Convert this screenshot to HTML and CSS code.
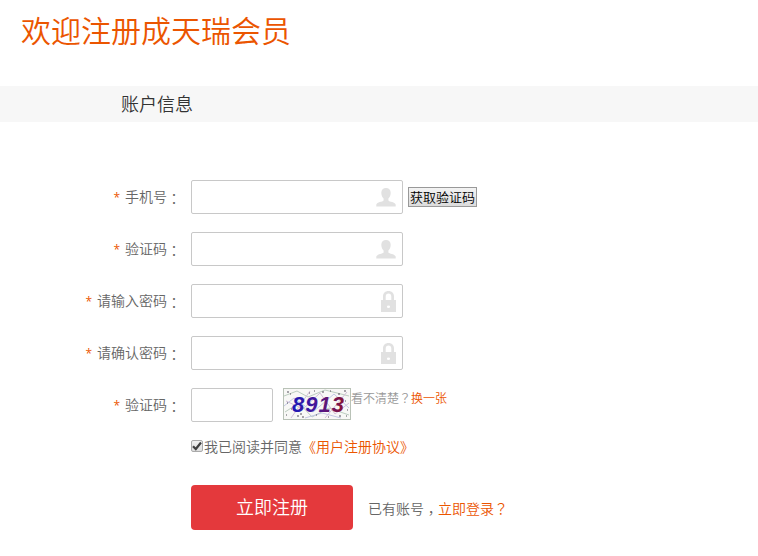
FILE: index.html
```html
<!DOCTYPE html>
<html lang="zh-CN">
<head>
    <meta charset="UTF-8">
    <title>会员注册</title>
    <link rel="stylesheet" href="styles.css">
</head>
<body>
    <svg width="0" height="0" class="defs">
        <symbol id="user" viewBox="0 0 20 20">
            <path d="M10 1C7.200 1 5.300 2.800 5.300 5.800C5.300 8.300 6.300 10.400 7.600 11.500V13.600C6.500 15 1 15.200 0.300 17.500V19.500H19.700V17.500C19 15.200 13.500 15 12.400 13.600V11.500C13.700 10.400 14.700 8.300 14.700 5.800C14.700 2.800 12.800 1 10 1Z"/>
        </symbol>
        <symbol id="lock" viewBox="0 0 15 21">
            <path fill-rule="evenodd" d="M2 9V5.500C2 2.200 4.200 0 7.500 0S13 2.200 13 5.500V9H15V21H0V9ZM4.700 9H10.300V5.500C10.300 3.600 9.200 2.500 7.500 2.500S4.700 3.600 4.700 5.500ZM7.500 14.500A1.600 1.300 0 1 0 7.500 17.100A1.600 1.300 0 1 0 7.500 14.500Z"/>
        </symbol>
    </svg>

    <h1>欢迎注册成天瑞会员</h1>
    <h2>账户信息</h2>

    <form class="reg">
        <div class="row">
            <label for="phone"><i>*</i>手机号<b lang="zh-TW">：</b></label>
            <div class="field">
                <input type="text" id="phone">
                <svg class="ico-user"><use href="#user"/></svg>
            </div>
            <button type="button" class="get-code">获取验证码</button>
        </div>
        <div class="row">
            <label for="sms"><i>*</i>验证码<b lang="zh-TW">：</b></label>
            <div class="field">
                <input type="text" id="sms">
                <svg class="ico-user"><use href="#user"/></svg>
            </div>
        </div>
        <div class="row">
            <label for="pwd"><i>*</i>请输入密码<b lang="zh-TW">：</b></label>
            <div class="field">
                <input type="password" id="pwd">
                <svg class="ico-lock"><use href="#lock"/></svg>
            </div>
        </div>
        <div class="row">
            <label for="pwd2"><i>*</i>请确认密码<b lang="zh-TW">：</b></label>
            <div class="field">
                <input type="password" id="pwd2">
                <svg class="ico-lock"><use href="#lock"/></svg>
            </div>
        </div>
        <div class="row">
            <label for="captcha"><i>*</i>验证码<b lang="zh-TW">：</b></label>
            <div class="field short"><input type="text" id="captcha"></div>
            <!-- 图形验证码 -->
            <svg class="captcha" width="68" height="32" viewBox="0 0 68 32">
                <defs>
                    <linearGradient id="ink" gradientUnits="userSpaceOnUse" x1="9" y1="0" x2="60" y2="0">
                        <stop offset="0" stop-color="#1c18b8"/>
                        <stop offset=".5" stop-color="#4a1796"/>
                        <stop offset="1" stop-color="#861238"/>
                    </linearGradient>
                </defs>
                <rect x=".5" y=".5" width="67" height="31" fill="#f8f8f6" stroke="#b9c2b7"/>
                <g fill="none" stroke="#bccdc0">
                    <path d="M1 8L14 3L25 9L42 2L66 8M2 24L16 15L29 29L46 20L66 27"/>
                    <path stroke="#d3bfd8" d="M3 13L20 21L37 5L52 26L66 15M8 30L27 3M42 30L64 4"/>
                    <path stroke="#c3c8e4" d="M1 18L11 10L30 24L51 6L66 20M22 30L39 25L58 30"/>
                </g>
                <path fill="none" stroke="#554f5c" d="M4 4h2M4 15h1M7 6h1M3 27h1M14 28h2M17 26h2M19 29h2M31 3h1M39 4h2M47 3h1M55 6h2M61 3h2M62 13h1M64 22h1M56 28h2M45 29h1M33 27h1M26 5h1M8 21h1M63 28h1"/>
                <text x="9" y="24" textLength="52" fill="url(#ink)">8913</text>
            </svg>
            <p class="change">看不清楚<span lang="zh-TW">？</span><a>换一张</a></p>
        </div>

        <div class="agree">
            <span class="check"><svg width="10" height="10" viewBox="0 0 10 10"><path d="M1 5.200L3.800 8L9 1.500"/></svg></span>
            <span>我已阅读并同意<a>《用户注册协议》</a></span>
        </div>
        <div class="submit">
            <button type="button">立即注册</button>
            <p>已有账号<span lang="zh-TW" class="comma">，</span><a>立即登录<span lang="zh-TW">？</span></a></p>
        </div>
    </form>
</body>
</html>
```

FILE: styles.css
```css
* {
    margin: 0;
    padding: 0;
    box-sizing: border-box;
}
body {
    background: #fff;
    color: #666;
    font: 14px/20px "Noto Sans CJK SC", sans-serif;
    font-weight: 350;
    overflow: hidden;
}
.defs {
    display: block;
}
[lang="zh-TW"] {
    font-family: "Noto Sans CJK TC", sans-serif;
}
a {
    color: #eb5500;
}
h1 {
    height: 86px;
    padding: 8px 0 0 21px;
    color: #eb5500;
    font-size: 30px;
    font-weight: 350;
    line-height: 42px;
}
h2 {
    height: 36px;
    padding-left: 121px;
    background: #f7f7f7;
    color: #333;
    font-size: 18px;
    font-weight: 350;
    line-height: 35px;
}
.reg {
    padding-top: 58px;
}
.row {
    display: flex;
    height: 34px;
    margin-bottom: 18px;
}
.row label {
    width: 181px;
    margin-right: 10px;
    line-height: 32px;
    text-align: right;
}
.row label i {
    margin-right: 5px;
    color: #eb5500;
    font: 12px/20px "Open Sans", sans-serif;
}
.row label b {
    font-weight: 350;
    line-height: 1;
    vertical-align: -2px;
}
.field {
    position: relative;
    width: 212px;
}
.field.short {
    width: 82px;
}
.field input {
    display: block;
    width: 100%;
    height: 34px;
    border: 1px solid #c8c8c8;
    border-radius: 2px;
    outline: none;
}
.field svg {
    position: absolute;
    fill: #e1e1e1;
}
.ico-user {
    top: 7px;
    right: 7px;
    width: 20px;
    height: 20px;
}
.ico-lock {
    top: 7px;
    right: 7px;
    width: 15px;
    height: 21px;
}
.get-code {
    width: 69px;
    height: 20px;
    margin: 7px 0 0 5px;
    border: 1px solid #999;
    background: linear-gradient(#f3f3f3, #dcdcdc);
    color: #000;
    font: 13px/18px "Noto Sans CJK SC", sans-serif;
    font-weight: 350;
    white-space: nowrap;
}
.captcha {
    margin-left: 10px;
}
.captcha text {
    font: italic bold 22px "Liberation Sans", sans-serif;
}
.change {
    color: #999;
    font-size: 12px;
}
.agree {
    display: flex;
    margin: -4px 0 0 191px;
}
.check {
    width: 12px;
    height: 12px;
    margin: 4px 1px 0 0;
    border: 1px solid #aaa;
    border-radius: 2px;
    background: linear-gradient(#f0f0f0, #dedede);
}
.check svg {
    display: block;
    fill: none;
    stroke: #404040;
    stroke-width: 2.2;
}
.submit {
    display: flex;
    margin: 29px 0 0 191px;
}
.submit button {
    width: 162px;
    height: 45px;
    padding-bottom: 2px;
    border: 0;
    border-radius: 4px;
    background: #e4393c;
    color: #fff;
    font: 18px/43px "Noto Sans CJK SC", sans-serif;
    font-weight: 350;
}
.submit p {
    margin: 13px 0 0 15px;
}
.comma {
    line-height: 1;
    vertical-align: -4px;
}
```
